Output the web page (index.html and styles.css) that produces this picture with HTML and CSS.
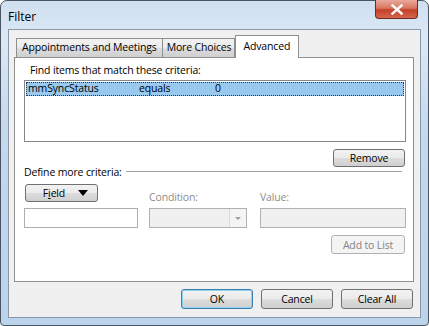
FILE: index.html
```html
<!DOCTYPE html>
<html>
<head>
  <title>Filter</title>
  <meta charset="UTF-8">
  <link rel="stylesheet" href="styles.css">
</head>
<body>
<div class="window">
  <div class="titlebar">
    <span class="title">Filter</span>
    <button class="close-btn">
      <svg width="14" height="11" viewBox="0 0 14 11"><path d="M2.5 1.5 L11.5 9.5 M11.5 1.5 L2.5 9.5" stroke="#fff" stroke-width="2.4" stroke-linecap="square"/></svg>
    </button>
  </div>

  <div class="client">
    <!-- zakładki -->
    <div class="tabs">
      <div class="tab">Appointments and Meetings</div>
      <div class="tab narrow">More Choices</div>
      <div class="tab active">Advanced</div>
    </div>

    <div class="panel">
      <div class="label">Find items that match these criteria:</div>
      <div class="listbox">
        <div class="list-row selected">
          <span class="col-field">mmSyncStatus</span>
          <span class="col-cond">equals</span>
          <span class="col-val">0</span>
        </div>
      </div>
      <div class="row-right">
        <button class="btn remove-btn">Remove</button>
      </div>

      <div class="group-title">
        <span>Define more criteria:</span>
        <div class="group-line"></div>
      </div>

      <div class="criteria">
        <div class="crit-col field-col">
          <button class="btn field-btn"><span>F<u>i</u>eld</span> <span class="tri"></span></button>
          <input type="text" class="textbox">
        </div>
        <div class="crit-col cond-col">
          <div class="small-label">Condition:</div>
          <div class="combo">
            <div class="combo-arrow"><span class="tri-small"></span></div>
          </div>
        </div>
        <div class="crit-col value-col">
          <div class="small-label">Value:</div>
          <div class="textbox disabled"></div>
          <button class="btn add-btn" disabled>Add to List</button>
        </div>
      </div>
    </div>

    <div class="footer">
      <button class="btn default">OK</button>
      <button class="btn">Cancel</button>
      <button class="btn">Clear All</button>
    </div>
  </div>
</div>
</body>
</html>
```

FILE: styles.css
```css
body {
  margin: 0;
  font-family: "Open Sans", "Noto Sans", sans-serif;
  font-size: 10.5px;
  letter-spacing: -0.15px;
  color: #000;
  background: #fff;
}

.window {
  width: 429px;
  height: 326px;
  box-sizing: border-box;
  border: 1px solid #4a5462;
  border-radius: 7px 7px 4px 4px;
  background: linear-gradient(180deg, #cfe0f1 0%, #dce8f4 12%, #c4d8ee 40%, #bcd3ec 100%);
  display: flex;
  flex-direction: column;
}

/* pasek tytułu */
.titlebar {
  height: 28px;
  display: flex;
  align-items: flex-start;
  padding-left: 7px;
}

.title {
  font-size: 12px;
  letter-spacing: 0;
  margin-top: 7px;
  color: #000;
}

.close-btn {
  margin-left: auto;
  margin-right: 10px;
  margin-top: -1px;
  width: 43px;
  height: 19px;
  border: 1px solid #6b2a22;
  border-top: none;
  border-radius: 0 0 4px 4px;
  background: linear-gradient(180deg, #e9a99a 0%, #d8765f 45%, #c4412a 55%, #d5664d 100%);
  display: flex;
  align-items: center;
  justify-content: center;
  padding: 0;
}

.client {
  margin: 0 7px 7px 7px;
  flex: 1;
  background: #f0f0f0;
  border: 1px solid #8a99aa;
  display: flex;
  flex-direction: column;
  padding: 4px 6px 0 5px;
}

/* zakładki */
.tabs {
  display: flex;
  align-items: flex-end;
  height: 23px;
  padding-left: 2px;
  position: relative;
  z-index: 1;
}

.tab {
  height: 18px;
  line-height: 17px;
  padding: 0 5px 0 5px;
  border: 1px solid #8e8f8f;
  border-bottom: none;
  margin-right: -1px;
  background: linear-gradient(180deg, #f2f2f2 0%, #ebebeb 50%, #dddddd 51%, #cfcfcf 100%);
  box-sizing: content-box;
}

.tab.narrow {
  padding: 0 3px 0 4px;
}

.tab.active {
  height: 22px;
  line-height: 20px;
  padding: 0 8px 0 7px;
  background: #fff;
  margin-left: 1px;
  margin-bottom: -1px;
  position: relative;
}

.panel {
  background: #fff;
  border: 1px solid #8e8f8f;
  height: 225px;
  box-sizing: border-box;
  padding: 5px 7px 0 9px;
  display: flex;
  flex-direction: column;
}

.label {
  padding-left: 6px;
  height: 16px;
}

.listbox {
  margin-top: 1px;
  height: 62px;
  box-sizing: border-box;
  border: 1px solid #828790;
  padding: 1px;
}

.list-row {
  height: 14px;
  line-height: 13px;
  display: flex;
  padding-left: 2px;
}

.list-row.selected {
  background: #99c9ef;
  outline: 1px dotted #333;
  outline-offset: -1px;
}

.col-field { width: 111px; }
.col-cond { width: 76px; }

.row-right {
  display: flex;
  justify-content: flex-end;
  margin-top: 7px;
}

.btn {
  font-family: inherit;
  font-size: 10.5px;
  letter-spacing: -0.15px;
  height: 19px;
  border: 1px solid #707070;
  border-radius: 3px;
  background: linear-gradient(180deg, #f2f2f2 0%, #ebebeb 50%, #dddddd 51%, #cfcfcf 100%);
  padding: 0;
  color: #000;
}

.remove-btn {
  width: 72px;
  height: 18px;
  margin-right: 1px;
}

.group-title {
  display: flex;
  align-items: center;
  height: 13px;
  margin-top: -2px;
}

.group-line {
  flex: 1;
  height: 0;
  border-top: 1px solid #a0a0a0;
  margin-left: 4px;
  margin-right: 4px;
}

.criteria {
  display: flex;
  margin-top: 6px;
}

.crit-col {
  display: flex;
  flex-direction: column;
}

.field-col { width: 114px; }

.field-btn {
  width: 73px;
  height: 18px;
  margin-left: 1px;
  padding-left: 8px;
  display: flex;
  align-items: center;
  gap: 13px;
  justify-content: center;
}

.tri {
  width: 0;
  height: 0;
  border-left: 5px solid transparent;
  border-right: 5px solid transparent;
  border-top: 6px solid #000;
}

.textbox {
  width: 114px;
  height: 20px;
  box-sizing: border-box;
  border: 1px solid #abadb3;
  margin-top: 6px;
  padding: 0;
}

.small-label {
  color: #8d8d8d;
  margin-top: 6px;
  height: 17px;
}

.cond-col {
  margin-left: 11px;
  width: 98px;
}

.combo {
  height: 20px;
  box-sizing: border-box;
  border: 1px solid #adb2b5;
  background: #f0f0f0;
  display: flex;
  justify-content: flex-end;
  margin-top: 1px;
}

.combo-arrow {
  width: 16px;
  border-left: 1px solid #d9d9d9;
  background: #f4f4f4;
  display: flex;
  align-items: center;
  justify-content: center;
}

.tri-small {
  width: 0;
  height: 0;
  border-left: 3px solid transparent;
  border-right: 3px solid transparent;
  border-top: 3px solid #a0a0a0;
}

.value-col {
  margin-left: 13px;
  width: 146px;
}

.value-col .textbox.disabled {
  width: 146px;
  background: #f0f0f0;
  border-color: #adb2b5;
  margin-top: 1px;
}

.add-btn {
  align-self: flex-end;
  width: 74px;
  margin-top: 7px;
  margin-right: 1px;
  color: #838383;
  border-color: #adb2b5;
  background: #f4f4f4;
}

.footer {
  display: flex;
  justify-content: flex-end;
  gap: 8px;
  margin-top: 7px;
  padding-right: 1px;
}

.footer .btn {
  width: 72px;
  height: 20px;
}

.footer .btn.default {
  border-color: #3c7fb1;
  box-shadow: inset 0 0 0 1px #8fd3f0;
}
```
